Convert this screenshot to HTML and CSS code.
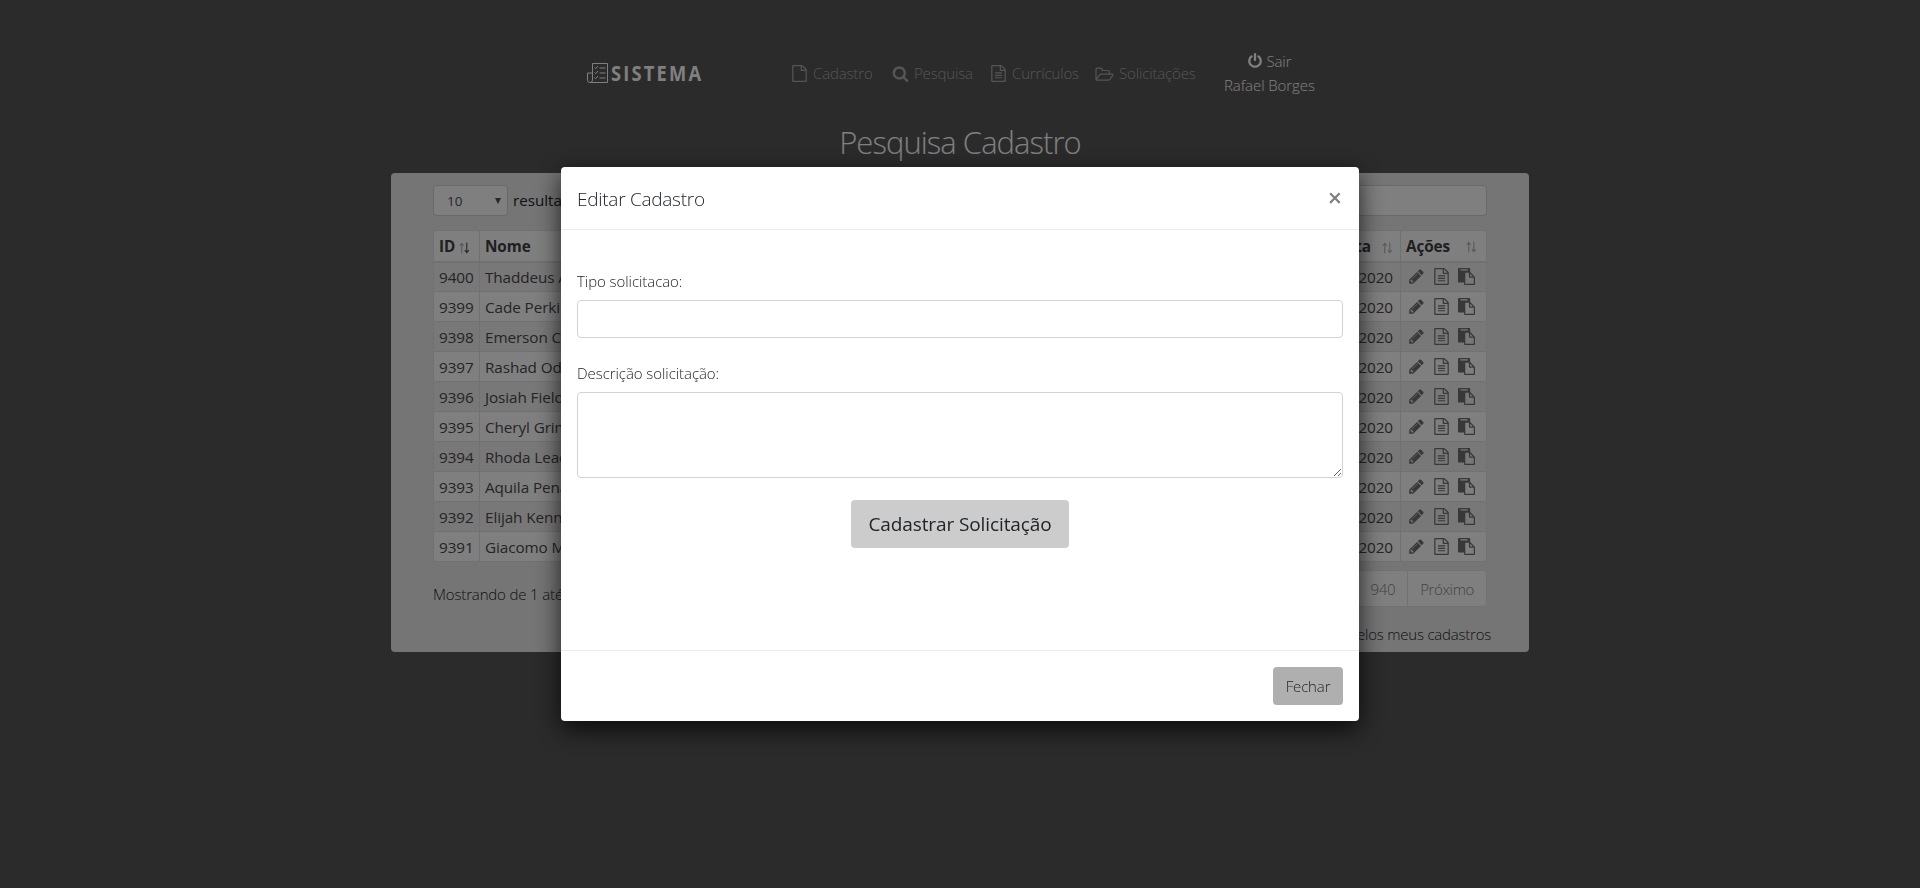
FILE: index.html
```html
<!DOCTYPE html>
<html lang="pt-BR">
<head>
<meta charset="utf-8">
<title>Pesquisa Cadastro</title>
<link rel="stylesheet" href="styles.css">
</head>
<body>
<svg class="sprite" aria-hidden="true">
<symbol id="file-o" viewBox="0 0 1792 1792"><path d="M1596 380q28 28 48 76t20 88v1152q0 40-28 68t-68 28h-1344q-40 0-68-28t-28-68v-1600q0-40 28-68t68-28h896q40 0 88 20t76 48zm-444-244v376h376q-10-29-22-41l-313-313q-12-12-41-22zm384 1528v-1024h-416q-40 0-68-28t-28-68v-416h-768v1536h1280z"/></symbol>
<symbol id="file-text" viewBox="0 0 1792 1792"><path d="M1596 380q28 28 48 76t20 88v1152q0 40-28 68t-68 28h-1344q-40 0-68-28t-28-68v-1600q0-40 28-68t68-28h896q40 0 88 20t76 48zm-444-244v376h376q-10-29-22-41l-313-313q-12-12-41-22zm384 1528v-1024h-416q-40 0-68-28t-28-68v-416h-768v1536h1280zm-1024-864q0-14 9-23t23-9h704q14 0 23 9t9 23v64q0 14-9 23t-23 9h-704q-14 0-23-9t-9-23v-64zm736 224q14 0 23 9t9 23v64q0 14-9 23t-23 9h-704q-14 0-23-9t-9-23v-64q0-14 9-23t23-9h704zm0 256q14 0 23 9t9 23v64q0 14-9 23t-23 9h-704q-14 0-23-9t-9-23v-64q0-14 9-23t23-9h704z"/></symbol>
<symbol id="search" viewBox="0 0 1792 1792"><path d="M1216 832q0-185-131.5-316.5t-316.5-131.5-316.5 131.5-131.5 316.5 131.5 316.5 316.5 131.5 316.5-131.5 131.5-316.5zm512 832q0 52-38 90t-90 38q-54 0-90-38l-343-342q-179 124-399 124-143 0-273.5-55.5t-225-150-150-225-55.5-273.5 55.5-273.5 150-225 225-150 273.5-55.5 273.5 55.5 225 150 150 225 55.5 273.5q0 220-124 399l343 343q37 37 37 90z"/></symbol>
<symbol id="power" viewBox="0 0 1792 1792"><path d="M1664 896q0 156-61 298t-164 245-245 164-298 61-298-61-245-164-164-245-61-298q0-182 80.5-343t226.5-270q43-32 95.5-25t83.5 50q32 42 24.5 94.5t-49.5 84.5q-98 74-151.5 181t-53.5 228q0 104 40.5 198.5t109.5 163.5 163.5 109.5 198.5 40.5 198.5-40.5 163.5-109.5 109.5-163.5 40.5-198.5q0-121-53.5-228t-151.5-181q-42-32-49.5-84.5t24.5-94.5q31-43 84-50t95 25q146 109 226.5 270t80.5 343zm-640-768v640q0 52-38 90t-90 38-90-38-38-90v-640q0-52 38-90t90-38 90 38 38 90z"/></symbol>
<symbol id="folder" viewBox="0 0 1920 1792"><path d="M1781 1061q0-35-53-35h-1088q-40 0-85.5 21.5t-71.5 52.5l-294 363q-18 24-18 40 0 35 53 35h1088q40 0 86-22t71-53l294-363q18-22 18-39zm-1141-163h768v-160q0-40-28-68t-68-28h-576q-40 0-68-28t-28-68v-64q0-40-28-68t-68-28h-320q-40 0-68 28t-28 68v853l256-315q44-53 116-87.5t140-34.5zm1269 163q0 62-46 120l-295 363q-43 53-116 87.5t-140 34.5h-1088q-92 0-158-66t-66-158v-960q0-92 66-158t158-66h320q92 0 158 66t66 158v32h544q92 0 158 66t66 158v160h192q54 0 99 24.5t67 70.5q15 32 15 68z"/></symbol>
<symbol id="pencil" viewBox="0 0 1792 1792"><path d="M491 1536l91-91-235-235-91 91v107h128v128h107zm523-928q0-22-22-22-10 0-17 7l-542 542q-7 7-7 17 0 22 22 22 10 0 17-7l542-542q7-7 7-17zm-54-192l416 416-832 832h-416v-416zm683 96q0 53-37 90l-166 166-416-416 166-165q36-38 90-38 53 0 91 38l235 234q37 39 37 91z"/></symbol>
<symbol id="paste" viewBox="0 0 1792 1792"><path d="M768 1664h896v-640h-416q-40 0-68-28t-28-68v-416h-384v1152zm256-1440v-64q0-13-9.500-22.500t-22.500-9.500h-704q-13 0-22.500 9.500t-9.500 22.500v64q0 13 9.500 22.500t22.500 9.500h704q13 0 22.500-9.500t9.500-22.500zm256 672h299l-299-299v299zm512 128v672q0 40-28 68t-68 28h-960q-40 0-68-28t-28-68v-160h-544q-40 0-68-28t-28-68v-1344q0-40 28-68t68-28h1088q40 0 68 28t28 68v328q21 13 36 28l408 408q28 28 48 76t20 88z"/></symbol>
</svg>

<header class="topbar">
  <a class="brand"><svg viewBox="0 0 22 21"><path d="M5.500 17V.5h15v19H3q-2.500 0-2.500-2V10h5M5.500 17q0 2.500-2.500 2.500"/><path d="M7.500 4.500l1.200 1.200L11 3M7.500 9.500l1.200 1.200L11 8M7.500 14.500l1.200 1.200L11 13M12.500 5h6M12.500 10h6M12.500 15h6"/></svg><span>SISTEMA</span></a>
  <nav class="menu">
    <a><svg><use href="#file-o"/></svg>Cadastro</a>
    <a><svg><use href="#search"/></svg>Pesquisa</a>
    <a><svg><use href="#file-text"/></svg>Currículos</a>
    <a><svg class="wide"><use href="#folder"/></svg>Solicitações</a>
  </nav>
  <div class="user"><a><svg><use href="#power"/></svg><span>Sair</span></a><span>Rafael Borges</span></div>
</header>
<h1>Pesquisa Cadastro</h1>

<main class="card">
  <div class="filters"><div class="select">10<i></i></div><span>resultados</span><div class="search"></div></div>
  <table>
    <thead><tr>
      <th class="id">ID<svg class="sort active" viewBox="0 0 12 12"><path d="M3 12V1M.8 3.600 3 1l2.200 2.600"/><path class="down" d="M8.500 0v11M6.300 8.400l2.200 2.600 2.200-2.600"/></svg></th>
      <th>Nome</th>
      <th class="date">Data<svg class="sort" viewBox="0 0 12 12"><path d="M3 12V1M.8 3.600 3 1l2.200 2.600M8.500 0v11M6.300 8.400l2.200 2.600 2.200-2.600"/></svg></th>
      <th class="act">Ações<svg class="sort" viewBox="0 0 12 12"><path d="M3 12V1M.8 3.600 3 1l2.200 2.600M8.500 0v11M6.300 8.400l2.200 2.600 2.200-2.600"/></svg></th>
    </tr></thead>
    <tbody id="rows"></tbody>
  </table>
  <div class="summary"><span>Mostrando de 1 até 10</span><div class="pages"><a>940</a><a>Próximo</a></div></div>
  <p class="mine">pelos meus cadastros</p>
</main>

<div class="backdrop">
  <section class="modal">
    <div class="modal-head"><h2>Editar Cadastro</h2><button class="close">×</button></div>
    <form class="modal-body">
      <label>Tipo solicitacao:</label><input type="text">
      <label>Descrição solicitação:</label><textarea></textarea>
      <button type="button" class="submit">Cadastrar Solicitação</button>
    </form>
    <div class="modal-foot"><button class="dismiss">Fechar</button></div>
  </section>
</div>
<script src="rows.js"></script>
</body>
</html>
```
FILE: rows.js
```js
const names = ["Thaddeus Allen", "Cade Perkins", "Emerson Cole", "Rashad Odom", "Josiah Fields", "Cheryl Grimes", "Rhoda Leach", "Aquila Pena", "Elijah Kennedy", "Giacomo Mason"];
const icon = id => `<svg><use href="#${id}"/></svg>`;
document.getElementById("rows").innerHTML = names.map((name, i) =>
  `<tr><td>${9400 - i}</td><td>${name}</td><td class="date">2020</td><td><div class="actions">${icon("pencil")}${icon("file-text")}${icon("paste")}</div></td></tr>`
).join("");
```
FILE: styles.css
```css
* { box-sizing: border-box; }
body { margin: 0; height: 888px; overflow: hidden; background: #565656; color: #212529; font: 300 15px/24px "Open Sans", "Noto Sans", sans-serif; letter-spacing: -.15px; }
svg { fill: currentColor; flex: none; }
.sprite { position: absolute; width: 0; height: 0; }
.topbar { display: flex; align-items: center; width: 746px; height: 98px; margin: 0 auto; padding-top: 48px; color: #fff; }
.brand { display: flex; align-items: center; width: 204px; gap: 2px; font: 700 21.500px/22px "Open Sans", sans-serif; letter-spacing: 2.600px; }
.brand svg { width: 22px; height: 21px; fill: none; stroke: currentColor; stroke-width: 1; }
.brand span { transform: scaleX(.85); transform-origin: left; padding-bottom: 1px; }
.menu { display: grid; grid-template-columns: 101px 98px 105px 103px; color: #ababab; }
.menu a { display: flex; align-items: center; }
.menu svg { width: 17px; height: 17px; margin-right: 5px; }
.menu svg.wide { width: 19px; }
.user { display: flex; flex-direction: column; align-items: center; margin-left: 26px; letter-spacing: -.08px; }
.user a { display: flex; align-items: center; gap: 3px; }
.user svg { width: 16px; height: 16px; }
h1 { margin: 21px 0 12px; height: 42px; font-size: 31px; font-weight: 300; line-height: 47px; letter-spacing: -.95px; text-align: center; color: #fff; }
.card { width: 1138px; height: 479px; margin: 0 auto; padding: 12px 42px 0 42px; background: #eaeaea; border-radius: 4px; }
.filters { display: flex; align-items: center; height: 31px; font-weight: 400; font-size: 15.200px; letter-spacing: 0; line-height: 22px; }
.filters span { padding-bottom: 2px; }
.select { display: flex; align-items: center; justify-content: space-between; width: 75px; height: 31px; padding: 0 6px 0 13px; margin-right: 5px; border: 1px solid #ced4da; border-radius: 4px; background: #fff; font-size: 13.500px; color: #495057; }
.select i { border: 3px solid transparent; border-top: 6px solid #495057; border-bottom: 0; }
.search { margin-left: auto; width: 240px; height: 31px; border: 1px solid #ced4da; border-radius: 4px; background: #fff; }
table { width: 1054px; margin-top: 14px; table-layout: fixed; border-collapse: collapse; background: #fff; font-weight: 400; font-size: 15.300px; }
th, td { height: 30px; padding: 0 5px; border: 1px solid #dee2e6; text-align: left; line-height: 24px; letter-spacing: -.1px; white-space: nowrap; }
td { color: #4a4a4a; }
th { height: 31px; font-weight: 700; border-bottom-width: 2px; color: #404040; }
th.id { width: 46px; }
th.act { width: 86px; }
.date { width: 120px; text-align: right; padding-right: 7px; }
tbody tr:nth-child(odd) { background: #f0f0f0; }
.sort { width: 11px; height: 12px; fill: none; stroke: #b5b5b5; stroke-width: 1.200; vertical-align: -2px; }
.sort .down { stroke: #555; }
.id .sort { margin-left: 4px; }
.date .sort { margin-left: 11px; }
.act .sort { float: right; margin: 7px 4px 0 0; }
.actions { display: flex; gap: 9px; padding-left: 2px; color: #707070; }
.actions svg { width: 17px; height: 17px; margin-right: -1px; }
.summary { display: flex; justify-content: space-between; height: 36px; margin-top: 8px; line-height: 48px; }
.pages { display: flex; height: 37px; line-height: 36px; color: #868686; letter-spacing: -.35px; }
.pages a { padding: 0 12px; border: 1px solid #dee2e6; background: #fff; }
.pages a + a { margin-left: -1px; border-radius: 0 4px 4px 0; }
.mine { margin: 16px -4px 0 0; text-align: right; letter-spacing: -.22px; }
.backdrop { position: fixed; inset: 0; background: rgba(0,0,0,.5); padding-top: 167px; }
.modal { display: flex; flex-direction: column; width: 798px; height: 554px; margin: 0 auto; background: #fff; border-radius: 4px; box-shadow: 0 8px 24px rgba(0,0,0,.75); }
.modal-head { display: flex; justify-content: space-between; align-items: center; height: 63px; padding: 0 17px 0 16px; border-bottom: 1px solid #e9ecef; }
h2 { margin: 0; padding-top: 1px; font-size: 19px; font-weight: 300; letter-spacing: -.27px; }
button { font: inherit; letter-spacing: inherit; color: #212529; border: 0; border-radius: 4px; }
.close { padding: 0 0 2px; background: none; font-size: 25px; font-weight: 600; color: #7f7f7f; }
.modal-body { display: flex; flex-direction: column; flex: 1; padding: 39px 16px 0; }
label { height: 24px; margin-bottom: 7px; letter-spacing: -.06px; }
input, textarea { width: 766px; height: 38px; margin: 0; border: 1px solid #ced4da; border-radius: 4px; background: #fff; }
input { margin-bottom: 23px; }
textarea { height: 86px; resize: vertical; }
.submit { align-self: center; width: 218px; height: 48px; margin-top: 22px; font-size: 19px; font-weight: 400; letter-spacing: -.1px; background: #ccc; }
.modal-foot { display: flex; justify-content: flex-end; height: 71px; padding: 16px; border-top: 1px solid #e9ecef; }
.dismiss { width: 70px; height: 38px; background: #afafaf; }
```
